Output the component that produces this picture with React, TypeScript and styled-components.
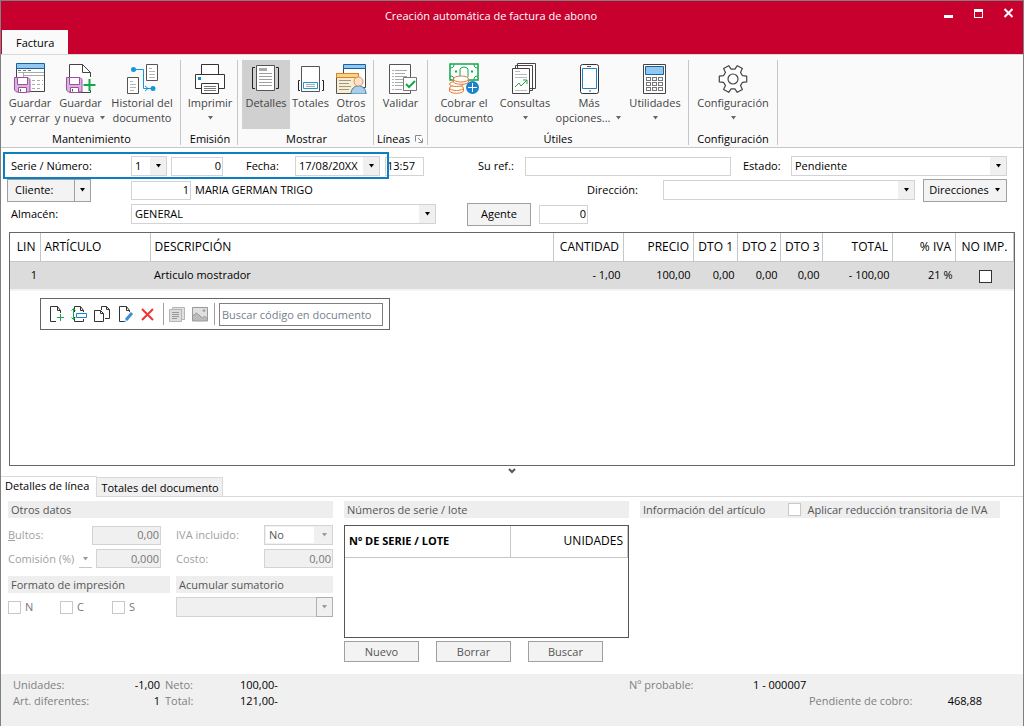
import React from "react";
import styled, { createGlobalStyle, css } from "styled-components";

const GlobalStyle = createGlobalStyle`
  *, *::before, *::after { box-sizing: border-box; }
  body {
    margin: 0;
    background: #fff;
    color: #000;
    font: 11px/16px "Open Sans", "Noto Sans", sans-serif;
  }
  button, input, select { font: inherit; color: inherit; margin: 0; }
  button { padding: 0; border: 0; background: none; }
`;

/* ---------- window frame ---------- */

const Window = styled.div`
  display: flex;
  flex-direction: column;
  min-height: 100vh;
  border: 1px solid #808080;
  border-bottom: 0;
`;

const TitleBar = styled.header`
  background: #c8002d;
`;

const Caption = styled.div`
  display: flex;
  height: 29px;
  align-items: center;
  padding-right: 8px;
`;

const Title = styled.h1`
  flex: 1;
  margin: 0;
  padding-left: 38px;
  color: #fff;
  font-size: 11px;
  font-weight: 400;
  text-align: center;
`;

const CaptionButtons = styled.div`
  display: flex;
  gap: 18px;
  padding-bottom: 6px;
`;

const CaptionButton = styled.button`
  width: 12px;
  height: 12px;
  svg { display: block; }
`;

const RibbonTabs = styled.nav`
  display: flex;
  height: 24px;
  padding-left: 1px;
`;

const RibbonTab = styled.button`
  padding: 2px 14px 0;
  background: #fafafa;
  font-size: 11px;
`;

/* ---------- ribbon ---------- */

const Ribbon = styled.section`
  display: flex;
  height: 94px;
  padding: 5px 0 2px;
  background: #fafafa;
  border-top: 1px solid #d8d8d8;
  border-bottom: 1px solid #c6c6c6;
`;

const Group = styled.div<{ $lead?: boolean }>`
  display: flex;
  flex-direction: column;
  justify-content: space-between;
  padding: ${(p) => (p.$lead ? "0 2px 0 4px" : "0 3px")};
  border-right: 1px solid #c6c6c6;
`;

const Tools = styled.div`
  display: flex;
`;

const GroupLabel = styled.div`
  display: flex;
  justify-content: center;
  gap: 5px;
  line-height: 12px;
  svg { margin-top: 2px; }
`;

const ToolButton = styled.button<{ $width: number; $active?: boolean }>`
  display: flex;
  flex-direction: column;
  align-items: center;
  width: ${(p) => p.$width}px;
  height: 69px;
  padding-top: 2px;
  line-height: 15px;
  color: #444;
  white-space: nowrap;
  background: ${(p) => (p.$active ? "#d0d0d0" : "transparent")};
  svg { flex: none; }
`;

const ToolText = styled.span`
  display: flex;
  align-items: center;
  gap: 5px;
  height: 15px;
`;

const IconBox = styled.span`
  height: 33px;
`;

const Caret = ({ color = "#666" }: { color?: string }) => (
  <svg width="7" height="4" viewBox="0 0 7 4" aria-hidden="true">
    <path d="M1 0h5L3.500 3.500z" fill={color} />
  </svg>
);

/* ---------- form ---------- */

const Form = styled.form`
  display: flex;
  flex-direction: column;
  gap: 4px;
  padding: 8px 16px 0 6px;
`;

const FormRow = styled.div<{ $cols: string }>`
  display: grid;
  grid-template-columns: ${(p) => p.$cols};
  grid-template-rows: 20px;
  align-items: center;
  white-space: nowrap;
`;

const Label = styled.label<{ $muted?: boolean }>`
  padding-left: 4px;
  ${(p) => p.$muted && css`padding-left: 0; color: #a0a0a0;`}
`;

const Highlighted = styled.div`
  position: relative;
  display: grid;
  grid-template-columns: 124px 36px 4px 52px 19px 53px 85px;
  align-items: center;
  &::after {
    content: "";
    position: absolute;
    inset: -4px -9px -3px -4px;
    border: 2px solid #0a7fc4;
    pointer-events: none;
  }
`;

const Field = styled.input<{ $right?: boolean }>`
  width: 100%;
  min-width: 0;
  height: 19px;
  padding: 0 1px 1px;
  border: 1px solid #d3d3d3;
  background: #fff;
  text-align: ${(p) => (p.$right ? "right" : "left")};
  &:disabled { background: #f0f0f0; color: #777; }
`;

const SelectWrap = styled.span<{ $off?: boolean; $boxed?: boolean }>`
  position: relative;
  display: block;
  height: 20px;
  border: 1px solid #d3d3d3;
  background: ${(p) => (p.$off ? "#f0f0f0" : "#fff")};
  &::after {
    content: "";
    position: absolute;
    inset: 0 0 0 auto;
    width: 16px;
    background: #f0f0f0;
    pointer-events: none;
    ${(p) => p.$boxed && css`
      inset: -1px -1px -1px auto;
      width: 17px;
      border: 1px solid #b0b0b0;
    `}
  }
  svg {
    position: absolute;
    z-index: 1;
    right: 4px;
    top: 7px;
    pointer-events: none;
  }
  select {
    display: block;
    appearance: none;
    width: 100%;
    height: 18px;
    padding: 0 16px 0 3px;
    border: 0;
    border-radius: 0;
    background: transparent;
    opacity: 1;
    color: ${(p) => (p.$off ? "#555" : "#000")};
  }
`;

type SelectProps = { id: string; value: string; label?: string; off?: boolean; boxed?: boolean };

const Select = ({ id, value, label, off, boxed }: SelectProps) => (
  <SelectWrap $off={off} $boxed={boxed}>
    <select id={id} aria-label={label} disabled={off} defaultValue={value}>
      <option>{value}</option>
    </select>
    <Caret color={off ? "#999" : "#000"} />
  </SelectWrap>
);

const PushButton = styled.button<{ $tall?: boolean }>`
  display: flex;
  align-items: center;
  justify-content: center;
  gap: 5px;
  width: 100%;
  height: ${(p) => (p.$tall ? 23 : 21)}px;
  border: 1px solid #a0a0a0;
  background: #f3f3f3;
`;

const SplitButton = styled.div`
  display: flex;
  width: 84px;
  height: 23px;
  border: 1px solid #a0a0a0;
  background: #f3f3f3;
  button:first-child { flex: 1; padding-left: 7px; text-align: left; }
  button:last-child {
    display: grid;
    place-items: center;
    width: 16px;
    border-left: 1px solid #a0a0a0;
  }
`;

/* ---------- document lines ---------- */

const LinesPanel = styled.section`
  flex: 1;
  margin: 8px 8px 0 8px;
  border: 1px solid #666;
`;

const LinesTable = styled.table`
  width: 100%;
  table-layout: fixed;
  border-collapse: collapse;
  border-bottom: 2px solid #f3f3f3;
  white-space: nowrap;
  th {
    height: 28px;
    padding: 0 4px;
    border-right: 1px solid #c6c6c6;
    border-bottom: 1px solid #c6c6c6;
    font-size: 12px;
    font-weight: 400;
    text-align: left;
  }
  td { height: 29px; padding: 0 3px 0 4px; background: #dcdcdc; }
  td:first-child { text-align: right; }
  .num { text-align: right; }
  .mid { text-align: center; }
`;

const CheckBox = styled.input<{ $dark?: boolean }>`
  appearance: none;
  display: inline-block;
  flex: none;
  width: 13px;
  height: 13px;
  border: 1px solid ${(p) => (p.$dark ? "#333" : "#c8c8c8")};
  background: #fff;
  vertical-align: middle;
`;

const LineToolbar = styled.div`
  display: flex;
  align-items: center;
  width: 350px;
  height: 32px;
  margin: 7px 0 0 30px;
  padding: 0 6px 0 7px;
  border: 1px solid #666;
`;

const LineButton = styled.button`
  width: 23px;
  height: 18px;
  svg { display: block; }
`;

const Divider = styled.span`
  width: 1px;
  height: 22px;
  margin-right: 4px;
  background: #a0a0a0;
`;

const SearchField = styled.input`
  flex: 1;
  min-width: 0;
  height: 23px;
  padding: 0 2px;
  border: 1px solid #808080;
  color: #000;
  &::placeholder { color: #76808e; opacity: 1; }
`;

const Expander = styled.button`
  display: grid;
  place-items: center;
  height: 10px;
`;

/* ---------- detail tabs ---------- */

const DetailTabs = styled.div`
  display: flex;
  align-items: flex-end;
  height: 21px;
  border-bottom: 1px solid #d9d9d9;
`;

const DetailTab = styled.button<{ $active?: boolean }>`
  height: ${(p) => (p.$active ? 21 : 19)}px;
  padding: 1px 3px 0 4px;
  border: 1px solid #d9d9d9;
  border-left: 0;
  border-bottom: 0;
  white-space: nowrap;
  background: #f0f0f0;
  ${(p) => p.$active && css`
    margin-bottom: -1px;
    padding: 0 7px 2px 4px;
    background: #fff;
  `}
`;

const Details = styled.section`
  display: grid;
  grid-template-columns: 325fr 285fr 360fr;
  gap: 11px;
  height: 177px;
  padding: 4px 23px 0 7px;
  color: #555;
`;

const Heading = styled.h2`
  display: flex;
  align-items: center;
  height: 17px;
  margin: 0;
  padding-left: 3px;
  background: #eee;
  font-size: 11px;
  font-weight: 400;
  white-space: nowrap;
`;

const Values = styled.div`
  display: grid;
  grid-template-columns: 71px 13px 4px 65px 15px 88px 1fr;
  grid-template-rows: 20px 19px;
  row-gap: 4px;
  align-items: center;
  margin: 7px 0 8px;
  white-space: nowrap;
  .bultos { grid-column: 3 / 5; }
  .comision { grid-column: 4; }
  .iva { grid-column: 6; }
`;

const TinyDrop = styled.button`
  align-self: end;
  display: grid;
  place-items: center;
  height: 17px;
  border-bottom: 1px solid #c6c6c6;
`;

const NoSelect = styled.div`
  select { width: 48px; height: 16px; margin: 1px 0 0 1px; background: #fff; }
`;

const Halves = styled.div`
  display: grid;
  grid-template-columns: 162fr 157fr;
  gap: 4px 6px;
  align-items: center;
`;

const Checks = styled.div`
  display: grid;
  grid-template-columns: 52px 52px 1fr;
`;

const CheckLabel = styled.label`
  display: flex;
  align-items: center;
  gap: 4px;
  color: #777;
`;

const InfoHeading = styled(Heading)`
  label { gap: 6px; margin-left: 23px; color: #555; }
`;

const SerialBox = styled.div`
  height: 113px;
  margin: 7px 0 3px;
  border: 1px solid #555;
  table { width: 100%; border-collapse: collapse; table-layout: fixed; color: #000; }
  th { height: 31px; padding: 0 4px; border: 1px solid #c6c6c6; border-width: 0 1px 1px 0; text-align: left; }
  th:last-child { width: 117px; text-align: right; font-size: 12px; font-weight: 400; }
`;

const SerialButtons = styled.div`
  display: grid;
  grid-template-columns: repeat(3, 75px);
  gap: 17px;
`;

const StatusBar = styled.footer`
  display: grid;
  grid-template-columns: 100px 47px 75px 1fr 124px 56px 103px 70px;
  grid-template-rows: 16px 16px;
  align-content: start;
  height: 52px;
  padding: 3px 41px 0 12px;
  background: #f0f0f0;
  color: #808080;
  white-space: nowrap;
  b { font-weight: 400; color: #000; }
  .right { text-align: right; }
  .after { padding-left: 5px; }
  .pending { grid-column: 7; }
`;

/* ---------- icons ---------- */

const Floppy = ({ x = 0, y = 14 }: { x?: number; y?: number }) => (
  <g transform={`translate(${x} ${y})`} stroke="#9b4ea3">
    <path d="M.5 1.500h13.500l2 2v12.500H2.500l-2-2z" fill="#dcb3dc" />
    <path d="M3.500 1.500h10v7h-10z" fill="#fff" />
    <path d="M4.500 16.500v-5h8v5z" fill="#fff" />
    <path d="M6.500 13v2.500" stroke="#555" />
  </g>
);

const svgProps = { width: 32, height: 32, viewBox: "0 0 32 32", fill: "none", "aria-hidden": true } as const;

const SaveCloseIcon = () => (
  <svg {...svgProps}>
    <path d="M2.500 4.500h28v25h-28z" fill="#fff" stroke="#444" />
    <path d="M2.500 1.500h28v5h-28z" fill="#92c8ef" stroke="#1464a5" />
    <path d="M4 8.500h3m2 0h3m2 0h3" stroke="#777" />
    <path d="M4 10.500h26M9.500 11v4M18 18.500h3m2 0h3m2 0h1M18 22.500h3m2 0h3m2 0h1M18 26.500h3m2 0h3" stroke="#aaa" />
    <path d="M10 13.500h20" stroke="#aaa" />
    <Floppy />
  </svg>
);
const SaveNewIcon = () => (
  <svg {...svgProps}>
    <path d="M4.500 29V2.500h13l8 8V30.500H4.500" fill="#fff" stroke="#444" />
    <path d="M17.500 2.500v8h8z" fill="#fff" stroke="#444" />
    <path d="M19 15h12v13H19z" fill="#fafafa" />
    <path d="M24.500 17v12M18.500 23h12" stroke="#10a84a" strokeWidth="2" />
    <Floppy x={1} />
  </svg>
);
const HistoryIcon = () => (
  <svg {...svgProps}>
    <path d="M20.500 2.500h11v16h-11zM1.500 15.500h11v16h-11z" fill="#fff" stroke="#555" />
    <path d="M23 6.500h3m-3 3h6m-6 3h6m-6 3h6M4 19.500h3m-3 3h6m-6 3h6m-6 3h4" stroke="#b5b5b5" />
    <path d="M8 7.500h9.500v19h9M19 24l3 2.500-3 2.500" stroke="#1296dc" />
    <circle cx="7.500" cy="7.500" r="2.500" fill="#1296dc" />
    <circle cx="27" cy="26.500" r="2.500" fill="#1296dc" />
  </svg>
);
const PrinterIcon = () => (
  <svg {...svgProps}>
    <path d="M7.500 12V2.500h17V12M1.500 12.500h29v14h-29z" fill="#fff" stroke="#333" />
    <path d="M4 15h3v3H4z" fill="#1a83cc" />
    <path d="M7.500 21.500h17v10h-17z" fill="#fff" stroke="#333" />
    <path d="M10 24.500h12m-12 2h12m-12 2h12" stroke="#777" />
  </svg>
);
const DetailsIcon = () => (
  <svg {...svgProps}>
    <path d="M5 5.500H2.500v21H5M26 5.500h2.500v21H26" stroke="#222" />
    <path d="M6.500 3.500h18v25h-18z" fill="#fff" stroke="#555" />
    <path d="M9 6h8v3H9z" fill="#aaa" />
    <path d="M9 11.500h13m-13 3h13m-13 3h13m-13 3h13m-13 3h13" stroke="#a0a0a0" />
  </svg>
);
const TotalsIcon = () => (
  <svg {...svgProps}>
    <path d="M5 18.500H3.500v10H5M27 18.500h1.500v10H27" stroke="#222" />
    <path d="M6.500 4.500h18v25h-18z" fill="#fff" stroke="#555" />
    <path d="M8.500 20.500h14v6h-14z" stroke="#169bd8" />
    <path d="M11 22.500h9m-9 2h9" stroke="#aaa" />
  </svg>
);
const OtherDataIcon = () => (
  <svg {...svgProps}>
    <path d="M8.500 4.500h22v21h-22z" fill="#fff" stroke="#444" />
    <path d="M8.500 2.500h22v4h-22z" fill="#92c8ef" stroke="#1464a5" />
    <path d="M1.500 11.500h22v20h-22z" fill="#f9edcc" stroke="#555" />
    <path d="M1.500 11.500h22v4h-22z" fill="#f3d58b" stroke="#e08128" />
    <path d="M4 18.500h12m-12 3h10m-10 3h12m-12 3h10" stroke="#999" />
    <path d="M16 32c0-11 15-11 15 0z" fill="#aacdea" stroke="#3c7ca8" />
    <circle cx="23.500" cy="19.500" r="4.500" fill="#fde2ca" stroke="#dd8d55" />
  </svg>
);
const ValidateIcon = () => (
  <svg {...svgProps}>
    <path d="M4.500 2.500h21v29h-21z" fill="#fff" stroke="#555" />
    <path d="M10 8.500h12m-12 3h10m-10 3h12m-12 3h8m-8 3h8m-8 3h8m-8 4h7" stroke="#aaa" />
    <path d="M8 8v1m0 5v1m0 5v1m0 2v1" stroke="#15904b" />
    <path d="M8 11v1m0 5v1m0 9v1" stroke="#d2433e" />
    <path d="M18.500 15.500h13v13h-13z" fill="#fff" stroke="#777" />
    <path d="m21 22 3 3 6-6" stroke="#16a94c" strokeWidth="2" />
  </svg>
);
const CashIcon = () => (
  <svg {...svgProps}>
    <path d="M2 2h28v16H2z" fill="#fff" stroke="#10a84a" strokeWidth="1.500" />
    <path d="M2 6c3 0 4-1 4-4m20 0c0 3 1 4 4 4M2 14c3 0 4 1 4 4m20 0c0-3 1-4 4-4" stroke="#10a84a" />
    <path d="M12 15V7q4-4 8 0v8" stroke="#10a84a" />
    <path d="M7 9.500h2m14 0h2" stroke="#10a84a" strokeWidth="2" />
    <g fill="#fff" stroke="#e77c35">
      <path d="M1.500 26v3c1 3 13 3 14 0v-3z" />
      <ellipse cx="8.500" cy="26" rx="7" ry="2.500" />
      <ellipse cx="8.500" cy="22" rx="7" ry="2.500" />
      <path d="M5.500 17v3c1 3 14 3 15 0v-3z" />
      <ellipse cx="13" cy="17" rx="7.500" ry="3" />
    </g>
    <circle cx="24.500" cy="25.500" r="6.500" fill="#1984cb" />
    <path d="M24.500 21v9M20 25.500h9" stroke="#fff" />
  </svg>
);
const ReportsIcon = () => (
  <svg {...svgProps}>
    <path d="M8.500 1.500h18v25h-18zM6.500 3.500h17v25h-17z" fill="#fff" stroke="#444" />
    <path d="M3.500 6.500h17v25h-17z" fill="#fff" stroke="#444" />
    <path d="M6 9.500h5m-5 3h12m-12 3h12m-12 13h12" stroke="#bbb" />
    <path d="m6 25 4-4 2 3 6-6M14 18h4v4" stroke="#2b9b45" />
  </svg>
);
const PhoneIcon = () => (
  <svg {...svgProps}>
    <rect x="7.500" y="2.500" width="18" height="29" rx="2" fill="#fff" stroke="#333" />
    <path d="M9.500 6.500h14v20h-14z" stroke="#1984cb" />
    <path d="M14 4.500h4M16 29h2" stroke="#555" />
  </svg>
);
const CalculatorIcon = () => (
  <svg {...svgProps}>
    <path d="M4.500 2.500h22v29h-22z" fill="#fff" stroke="#444" />
    <path d="M6.500 4.500h18v8h-18z" fill="#92c8ef" stroke="#1464a5" />
    {[15, 20, 25].map((y) =>
      [7, 13, 19].map((x) => (
        <rect key={`${x}-${y}`} x={x + 0.5} y={y + 0.5} width="4" height="3" stroke="#777" />
      )),
    )}
  </svg>
);

/* six teeth, the first one pointing right */
const gearPath =
  [0, 60, 120, 180, 240, 300]
    .flatMap((a) =>
      [
        [a - 19, 10],
        [a - 12, 14],
        [a + 12, 14],
        [a + 19, 10],
      ].map(([deg, r]) => {
        const t = (deg * Math.PI) / 180;
        return `${(16 + r * Math.cos(t)).toFixed(1)} ${(17 + r * Math.sin(t)).toFixed(1)}`;
      }),
    )
    .join("L");

const GearIcon = () => (
  <svg {...svgProps}>
    <path d={`M${gearPath}Z`} fill="#fff" stroke="#444" strokeWidth="1.200" strokeLinejoin="round" />
    <circle cx="16" cy="17" r="5" stroke="#444" strokeWidth="1.200" />
  </svg>
);
const LauncherIcon = () => (
  <svg width="9" height="9" viewBox="0 0 9 9" fill="none" aria-hidden="true">
    <path d="M.5 6.500v-6h6M3 3l4 4M7.500 3.500v4h-4" stroke="#888" />
  </svg>
);

const small = { width: 18, height: 18, viewBox: "0 0 18 18", fill: "none", "aria-hidden": true } as const;
const AddLineIcon = () => (
  <svg {...small}>
    <path d="M8 16.500H2.500v-15h7l3 4V8M9.500 1.500v4h3" stroke="#333" />
    <path d="M12.500 9v7M9 12.500h7" stroke="#10a84a" />
  </svg>
);
const InsertLineIcon = () => (
  <svg {...small}>
    <path d="M3.500 7V1.500h6l3 4V7M9.500 1.500v4h3M3.500 12v4.500h9V14" stroke="#333" />
    <path d="M5.500 8.500h10v4h-10z" fill="#fff" stroke="#1984cb" />
    <path d="M2.500 4v10M.5 5.500l2-2 2 2M.5 12.500l2 2 2-2" stroke="#10a84a" />
  </svg>
);
const CopyLineIcon = () => (
  <svg {...small}>
    <path d="M7.500 5V1.500h5l3 3v9H11M12.500 1.500v3h3" stroke="#333" />
    <path d="M.5 5.500h6l3 3v8h-9zM6.500 5.500v3h3" stroke="#333" />
  </svg>
);
const EditLineIcon = () => (
  <svg {...small}>
    <path d="M8 16.500H2.500v-15h7l3 4V7M9.500 1.500v4h3" stroke="#333" />
    <path d="m9 15 6-7" stroke="#3d8fd1" strokeWidth="3" />
    <path d="m7 16.500 2-.5" stroke="#3d8fd1" />
  </svg>
);
const DeleteIcon = () => (
  <svg {...small}>
    <path d="m2 4 11 11M13 4 2 15" stroke="#ee3434" strokeWidth="2" />
  </svg>
);
const NotesIcon = () => (
  <svg {...small}>
    <path d="M4.500 2.500h12v12h-12z" fill="#e0e0e0" stroke="#b5b5b5" />
    <path d="M1.500 4.500h12v12h-12z" fill="#ddd" stroke="#b5b5b5" />
    <path d="M4 7.500h7m-7 2h7m-7 2h7m-7 2h5" stroke="#999" />
  </svg>
);
const ImageIcon = () => (
  <svg {...small}>
    <path d="M1.500 2.500h15v13h-15z" fill="#e0e0e0" stroke="#999" />
    <path d="m1.500 11 4-3 6 5 2-2 3 3v2h-15z" fill="#bbb" stroke="#999" />
    <circle cx="13" cy="5.500" r="1.500" fill="#aaa" />
  </svg>
);

/* ---------- composition ---------- */

type ToolProps = {
  icon: React.ReactNode;
  lines: string[];
  width: number;
  caret?: "inline" | "below";
  active?: boolean;
};

const Tool = ({ icon, lines, width, caret, active }: ToolProps) => (
  <ToolButton type="button" $width={width} $active={active}>
    <IconBox>{icon}</IconBox>
    {lines.map((line, i) => (
      <ToolText key={line}>
        {line}
        {caret === "inline" && i === lines.length - 1 && <Caret />}
      </ToolText>
    ))}
    {caret === "below" && (
      <ToolText>
        <Caret />
      </ToolText>
    )}
  </ToolButton>
);

export default function App() {
  return (
    <>
      <GlobalStyle />
      <Window>
        <TitleBar>
          <Caption>
            <Title>Creación automática de factura de abono</Title>
            <CaptionButtons>
              <CaptionButton type="button" aria-label="Minimizar">
                <svg width="12" height="12"><path d="M1 8h9v3H1z" fill="#fff" /></svg>
              </CaptionButton>
              <CaptionButton type="button" aria-label="Maximizar">
                <svg width="12" height="12"><path d="M1 2h9v9H1zM2 5v5h7V5z" fill="#fff" fillRule="evenodd" /></svg>
              </CaptionButton>
              <CaptionButton type="button" aria-label="Cerrar">
                <svg width="12" height="12"><path d="m1.500 2 8 8m0-8-8 8" stroke="#fff" strokeWidth="2" /></svg>
              </CaptionButton>
            </CaptionButtons>
          </Caption>
          <RibbonTabs>
            <RibbonTab type="button">Factura</RibbonTab>
          </RibbonTabs>
        </TitleBar>

        <Ribbon>
          <Group $lead>
            <Tools>
              <Tool icon={<SaveCloseIcon />} lines={["Guardar", "y cerrar"]} width={50} />
              <Tool icon={<SaveNewIcon />} lines={["Guardar", "y nueva"]} width={51} caret="inline" />
              <Tool icon={<HistoryIcon />} lines={["Historial del", "documento"]} width={72} />
            </Tools>
            <GroupLabel>Mantenimiento</GroupLabel>
          </Group>
          <Group $lead>
            <Tools>
              <Tool icon={<PrinterIcon />} lines={["Imprimir"]} width={50} caret="below" />
            </Tools>
            <GroupLabel>Emisión</GroupLabel>
          </Group>
          <Group $lead>
            <Tools>
              <Tool icon={<DetailsIcon />} lines={["Detalles"]} width={48} active />
              <Tool icon={<TotalsIcon />} lines={["Totales"]} width={41} />
              <Tool icon={<OtherDataIcon />} lines={["Otros", "datos"]} width={40} />
            </Tools>
            <GroupLabel>Mostrar</GroupLabel>
          </Group>
          <Group>
            <Tools>
              <Tool icon={<ValidateIcon />} lines={["Validar"]} width={47} />
            </Tools>
            <GroupLabel>
              Líneas <LauncherIcon />
            </GroupLabel>
          </Group>
          <Group>
            <Tools>
              <Tool icon={<CashIcon />} lines={["Cobrar el", "documento"]} width={66} />
              <Tool icon={<ReportsIcon />} lines={["Consultas"]} width={56} caret="below" />
              <Tool icon={<PhoneIcon />} lines={["Más", "opciones..."]} width={72} caret="inline" />
              <Tool icon={<CalculatorIcon />} lines={["Utilidades"]} width={60} caret="below" />
            </Tools>
            <GroupLabel>Útiles</GroupLabel>
          </Group>
          <Group>
            <Tools>
              <Tool icon={<GearIcon />} lines={["Configuración"]} width={82} caret="below" />
            </Tools>
            <GroupLabel>Configuración</GroupLabel>
          </Group>
        </Ribbon>

        <Form onSubmit={(e) => e.preventDefault()}>
          <FormRow $cols="373px 5px 39px 50px 51px 206fr 8px 52px 216fr">
            <Highlighted>
              <Label htmlFor="serie">Serie / Número:</Label>
              <Select id="serie" value="1" />
              <span />
              <Field aria-label="Número" defaultValue="0" $right />
              <span />
              <Label htmlFor="fecha">Fecha:</Label>
              <Select id="fecha" value="17/08/20XX" />
            </Highlighted>
            <span />
            <Field aria-label="Hora" defaultValue="13:57" />
            <span />
            <Label htmlFor="ref">Su ref.:</Label>
            <Field id="ref" />
            <span />
            <Label htmlFor="estado">Estado:</Label>
            <Select id="estado" value="Pendiente" />
          </FormRow>
          <FormRow $cols="124px 60px 392px 80px 1fr 8px 84px">
            <SplitButton>
              <button type="button">Cliente:</button>
              <button type="button" aria-label="Opciones de cliente"><Caret color="#000" /></button>
            </SplitButton>
            <Field aria-label="Código de cliente" defaultValue="1" $right />
            <Label as="span">MARIA GERMAN TRIGO</Label>
            <Label htmlFor="direccion">Dirección:</Label>
            <Select id="direccion" value="" />
            <span />
            <PushButton type="button" $tall>
              Direcciones <Caret color="#000" />
            </PushButton>
          </FormRow>
          <FormRow $cols="124px 305px 31px 64px 8px 49px">
            <Label htmlFor="almacen">Almacén:</Label>
            <Select id="almacen" value="GENERAL" />
            <span />
            <PushButton type="button" $tall>Agente</PushButton>
            <span />
            <Field aria-label="Agente" defaultValue="0" $right />
          </FormRow>
        </Form>

        <LinesPanel>
          <LinesTable>
            <colgroup>
              {[30, 110, 0, 70, 70, 44, 43, 42, 70, 63, 58].map((w, i) => (
                <col key={i} width={w || undefined} />
              ))}
            </colgroup>
            <thead>
              <tr>
                <th className="num">LIN</th>
                <th>ARTÍCULO</th>
                <th>DESCRIPCIÓN</th>
                <th className="num">CANTIDAD</th>
                <th className="num">PRECIO</th>
                <th className="num">DTO 1</th>
                <th className="num">DTO 2</th>
                <th className="num">DTO 3</th>
                <th className="num">TOTAL</th>
                <th className="num">% IVA</th>
                <th className="mid">NO IMP.</th>
              </tr>
            </thead>
            <tbody>
              <tr>
                <td>1</td>
                <td />
                <td>Articulo mostrador</td>
                <td className="num">- 1,00</td>
                <td className="num">100,00</td>
                <td className="num">0,00</td>
                <td className="num">0,00</td>
                <td className="num">0,00</td>
                <td className="num">- 100,00</td>
                <td className="num">21 %</td>
                <td className="mid">
                  <CheckBox type="checkbox" aria-label="No imprimir" $dark />
                </td>
              </tr>
            </tbody>
          </LinesTable>
          <LineToolbar>
            <LineButton type="button" aria-label="Nueva línea"><AddLineIcon /></LineButton>
            <LineButton type="button" aria-label="Insertar línea"><InsertLineIcon /></LineButton>
            <LineButton type="button" aria-label="Duplicar línea"><CopyLineIcon /></LineButton>
            <LineButton type="button" aria-label="Editar línea"><EditLineIcon /></LineButton>
            <LineButton type="button" aria-label="Borrar línea"><DeleteIcon /></LineButton>
            <Divider />
            <LineButton type="button" aria-label="Notas"><NotesIcon /></LineButton>
            <LineButton type="button" aria-label="Imagen"><ImageIcon /></LineButton>
            <Divider />
            <SearchField aria-label="Buscar código" placeholder="Buscar código en documento" />
          </LineToolbar>
        </LinesPanel>
        <Expander type="button" aria-label="Contraer panel">
          <svg width="8" height="6" fill="none"><path d="m1 1 3 3 3-3" stroke="#555" strokeWidth="2" /></svg>
        </Expander>

        <DetailTabs>
          <DetailTab type="button" $active>Detalles de línea</DetailTab>
          <DetailTab type="button">Totales del documento</DetailTab>
        </DetailTabs>
        <Details>
          <div>
            <Heading>Otros datos</Heading>
            <Values>
              <Label $muted htmlFor="bultos"><u>B</u>ultos:</Label>
              <Field className="bultos" id="bultos" defaultValue="0,00" $right disabled />
              <Label className="iva" $muted htmlFor="iva">IVA incluido:</Label>
              <NoSelect><Select id="iva" value="No" off /></NoSelect>
              <Label $muted htmlFor="comision">Comisión (%)</Label>
              <TinyDrop type="button" aria-label="Tipo de comisión"><Caret color="#999" /></TinyDrop>
              <Field className="comision" id="comision" defaultValue="0,000" $right disabled />
              <Label className="iva" $muted htmlFor="costo">Costo:</Label>
              <Field id="costo" defaultValue="0,00" $right disabled />
            </Values>
            <Halves>
              <Heading>Formato de impresión</Heading>
              <Heading>Acumular sumatorio</Heading>
              <Checks>
                {["N", "C", "S"].map((name) => (
                  <CheckLabel key={name}>
                    <CheckBox type="checkbox" /> {name}
                  </CheckLabel>
                ))}
              </Checks>
              <Select id="acumular" label="Acumular sumatorio" value="" off boxed />
            </Halves>
          </div>
          <div>
            <Heading>Números de serie / lote</Heading>
            <SerialBox>
              <table>
                <thead>
                  <tr>
                    <th>Nº DE SERIE / LOTE</th>
                    <th>UNIDADES</th>
                  </tr>
                </thead>
              </table>
            </SerialBox>
            <SerialButtons>
              <PushButton type="button">Nuevo</PushButton>
              <PushButton type="button">Borrar</PushButton>
              <PushButton type="button">Buscar</PushButton>
            </SerialButtons>
          </div>
          <div>
            <InfoHeading>
              Información del artículo
              <CheckLabel>
                <CheckBox type="checkbox" /> Aplicar reducción transitoria de IVA
              </CheckLabel>
            </InfoHeading>
          </div>
        </Details>

        <StatusBar>
          <span>Unidades:</span>
          <b className="right">-1,00</b>
          <span className="after">Neto:</span>
          <b className="after">100,00-</b>
          <span>Nº probable:</span>
          <b>1 - 000007</b>
          <span />
          <span />
          <span>Art. diferentes:</span>
          <b className="right">1</b>
          <span className="after">Total:</span>
          <b className="after">121,00-</b>
          <span className="pending">Pendiente de cobro:</span>
          <b className="right">468,88</b>
        </StatusBar>
      </Window>
    </>
  );
}
